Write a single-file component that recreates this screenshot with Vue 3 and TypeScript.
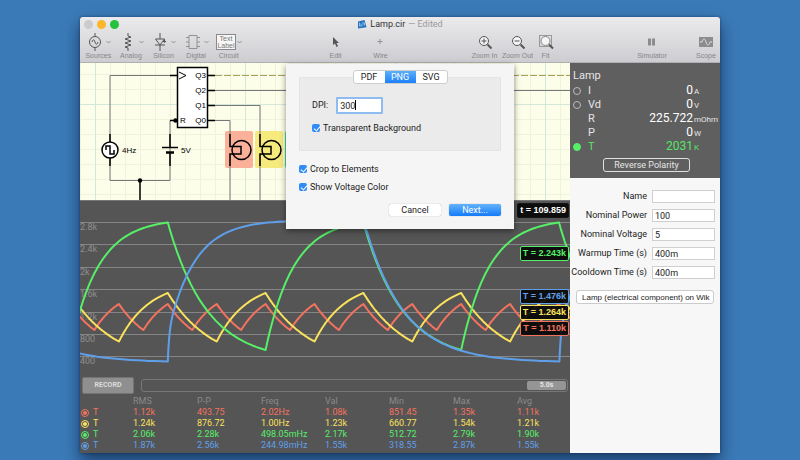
<script setup lang="ts">
import { computed, ref } from 'vue'

interface Trace { color: string; rms: string; pp: string; freq: string; val: string; min: string; max: string; avg: string }
interface Knot { x: number; y: number }
interface Reading { name: string; value: string; unit: string; plot: 'off' | 'on' | 'none' }

const red = '#f4735f'
const yellow = '#fbe25c'
const green = '#57ef68'
const blue = '#5f9fea'

const format = ref('PNG')
const formats = ['PDF', 'PNG', 'SVG']
const dpi = ref('300')
const transparent = ref(true)
const crop = ref(true)
const voltageColor = ref(true)

const readings: Reading[] = [
  { name: 'I', value: '0', unit: 'A', plot: 'off' },
  { name: 'Vd', value: '0', unit: 'V', plot: 'off' },
  { name: 'R', value: '225.722', unit: 'mOhm', plot: 'none' },
  { name: 'P', value: '0', unit: 'W', plot: 'none' },
  { name: 'T', value: '2031', unit: 'K', plot: 'on' },
]

const fields = ref([
  { id: 'name', label: 'Name', value: '' },
  { id: 'power', label: 'Nominal Power', value: '100' },
  { id: 'voltage', label: 'Nominal Voltage', value: '5' },
  { id: 'warmup', label: 'Warmup Time (s)', value: '400m' },
  { id: 'cooldown', label: 'Cooldown Time (s)', value: '400m' },
])

const traces: Trace[] = [
  { color: red, rms: '1.12k', pp: '493.75', freq: '2.02Hz', val: '1.08k', min: '851.45', max: '1.35k', avg: '1.11k' },
  { color: yellow, rms: '1.24k', pp: '876.72', freq: '1.00Hz', val: '1.23k', min: '660.77', max: '1.54k', avg: '1.21k' },
  { color: green, rms: '2.06k', pp: '2.28k', freq: '498.05mHz', val: '2.17k', min: '512.72', max: '2.79k', avg: '1.90k' },
  { color: blue, rms: '1.87k', pp: '2.56k', freq: '244.98mHz', val: '1.55k', min: '318.55', max: '2.87k', avg: '1.55k' },
]

const axis = ['2.8k', '2.4k', '2k', '1.6k', '1.2k', '800', '400'].map((label, i) => ({
  label,
  y: Math.round(21 + i * 22.4) + 0.5,
}))

const tags = [
  { text: 't = 109.859', color: '#ffffff', edge: '#151515', top: 2 },
  { text: 'T = 2.243k', color: green, edge: green, top: 45 },
  { text: 'T = 1.476k', color: blue, edge: blue, top: 88 },
  { text: 'T = 1.264k', color: yellow, edge: yellow, top: 104 },
  { text: 'T = 1.110k', color: red, edge: red, top: 120 },
]

/* Lamp temperature between two switching moments: heating and cooling are exponential. */
function curve(knots: Knot[], heat: (t: number) => number, cool: (t: number) => number): string {
  const pts: string[] = [`${knots[0].x},${knots[0].y}`]
  for (let i = 1; i < knots.length; i++) {
    const a = knots[i - 1]
    const b = knots[i]
    const shape = b.y < a.y ? heat : cool
    for (let s = 1; s <= 60; s++) {
      const t = (s / 60) * (s / 60)
      const x = a.x + (b.x - a.x) * t
      const y = a.y + ((b.y - a.y) * shape(t)) / shape(1)
      pts.push(`${x.toFixed(1)},${y.toFixed(1)}`)
    }
  }
  return pts.join(' ')
}
const expo = (k: number) => (t: number) => 1 - Math.exp(-k * t)
function zigzag(first: number, half: number, count: number, high: number, low: number, startHigh: boolean): Knot[] {
  return Array.from({ length: count }, (_, i) => ({ x: first + i * half, y: (i % 2 === 0) === startHigh ? high : low }))
}

const plots = computed(() => [
  { color: red, points: curve(zigzag(-10, 24.45, 22, 103, 129, true), expo(0.9), expo(0.7)) },
  { color: yellow, points: curve(zigzag(-10, 48.9, 12, 92, 140.5, true), expo(1.6), expo(1.1)) },
  { color: green, points: curve(zigzag(-10, 97.8, 7, 21.5, 149, false), expo(3.5), expo(2.5)) },
  {
    color: blue,
    points: curve(zigzag(-108, 195.8, 5, 19, 160.5, true),
      (t) => 0.2 * (1 - Math.exp(-150 * t)) + 0.8 * (1 - Math.exp(-7.3 * t)), expo(5)),
  },
])

const minorX = Array.from({ length: 34 }, (_, i) => 0.5 + i * 15)
const minorY = Array.from({ length: 9 }, (_, i) => 12 + i * 15)
const pins = [{ n: 'Q3', y: 12 }, { n: 'Q2', y: 27 }, { n: 'Q1', y: 42 }, { n: 'Q0', y: 57 }]
const lamps = [{ x: 150, fill: '#fbb09a' }, { x: 180, fill: '#f6ea7c' }, { x: 210, fill: '#4be07f' }]
</script>

<template>
  <main class="desktop">
    <div class="window">
      <header class="chrome">
        <div class="titlebar">
          <div class="lights">
            <span class="light"></span><span class="light amber"></span><span class="light lime"></span>
          </div>
          <h1 class="title">
            <svg width="10" height="9" viewBox="0 0 10 9"><path d="M1 1.5 7.5 0 9.5 7.2 1 8.5Z" fill="#2672b8" /><path d="M2.5 2.5v4M4 3.5v3l2-2V2M7.5 2.5v3" stroke="#a8d2f4" stroke-width=".8" fill="none" /></svg>
            Lamp.cir <span class="edited">— Edited</span>
          </h1>
        </div>
        <nav class="toolbar">
          <div class="parts">
            <button class="tool part">
              <span class="glyph"><svg class="pic" width="20" height="18" viewBox="0 0 20 18"><path d="M10 0v3M10 15v3M7 9c1-3 2-3 3 0s2 3 3 0" /><circle cx="10" cy="9" r="5.5" /></svg><svg class="chev" width="5" height="4" viewBox="0 0 5 4"><path d="M.5 1l2 2 2-2" /></svg></span>
              Sources
            </button>
            <button class="tool part">
              <span class="glyph"><svg class="pic" width="20" height="18" viewBox="0 0 20 18"><path d="M10 0v3l3 1-6 2 6 2-6 2 6 2-6 2 3 1v3" /></svg><svg class="chev" width="5" height="4" viewBox="0 0 5 4"><path d="M.5 1l2 2 2-2" /></svg></span>
              Analog
            </button>
            <button class="tool part">
              <span class="glyph"><svg class="pic" width="20" height="18" viewBox="0 0 20 18"><path d="M10 0v6M10 12v6M5.500 6h9L10 12ZM5 12h10M14.500 6v3M13 8l1.500 1.500L16 8" /></svg><svg class="chev" width="5" height="4" viewBox="0 0 5 4"><path d="M.5 1l2 2 2-2" /></svg></span>
              Silicon
            </button>
            <button class="tool part">
              <span class="glyph"><svg class="pic faint" width="20" height="18" viewBox="0 0 20 18"><path d="M6 2.500h8v13H6ZM3 4.500h3M3 9h3M3 13.500h3M14 4.500h3M14 9h3M14 13.500h3" /></svg><svg class="chev" width="5" height="4" viewBox="0 0 5 4"><path d="M.5 1l2 2 2-2" /></svg></span>
              Digital
            </button>
            <button class="tool part">
              <span class="glyph"><svg class="pic" width="20" height="18" viewBox="0 0 20 18"><rect x=".5" y="1.500" width="19" height="15" fill="#f6f6f6" stroke="#888" /><text x="10" y="8">Text</text><text x="10" y="15">Label</text></svg><svg class="chev" width="5" height="4" viewBox="0 0 5 4"><path d="M.5 1l2 2 2-2" /></svg></span>
              Circuit
            </button>
          </div>
          <span class="space one"></span>
          <button class="tool mode"><span class="glyph"><svg width="16" height="18" viewBox="0 0 16 18"><path d="M5 4v8l2-1.500 1.500 3.500 1.500-.7L8.500 10H11Z" fill="#555" stroke="none" /></svg></span>Edit</button>
          <button class="tool mode"><span class="glyph"><svg class="faint" width="16" height="18" viewBox="0 0 16 18"><path d="M4.500 8.500h5M7 6v5" /></svg></span>Wire</button>
          <span class="space two"></span>
          <button class="tool zoom"><span class="glyph"><svg class="pic" width="16" height="18" viewBox="0 0 16 18"><circle cx="7" cy="8" r="4.500" fill="#f4f4f4" /><path d="M4.500 8h5M7 5.500v5" /><path d="M10.500 11.500l4 4" stroke-width="2" /></svg></span>Zoom In</button>
          <button class="tool zoom"><span class="glyph"><svg class="pic" width="16" height="18" viewBox="0 0 16 18"><circle cx="7" cy="8" r="4.500" fill="#f4f4f4" /><path d="M4.500 8h5" /><path d="M10.500 11.500l4 4" stroke-width="2" /></svg></span>Zoom Out</button>
          <button class="tool fit"><span class="glyph"><svg class="pic" width="16" height="18" viewBox="0 0 16 18"><rect x="1.500" y="2.500" width="12" height="11" stroke="#999" /><circle cx="7.500" cy="8" r="4.500" fill="#f4f4f4" stroke="#888" /><path d="M11 11.500l4 4" stroke-width="2" /></svg></span>Fit</button>
          <span class="space three"></span>
          <button class="tool sim"><span class="glyph"><svg width="16" height="18" viewBox="0 0 16 18"><path d="M4 5.500H7v7H4ZM8 5.500h3v7H8Z" fill="#8c8b8d" stroke="none" /></svg></span>Simulator</button>
          <span class="space four"></span>
          <button class="tool scope"><span class="glyph"><svg width="16" height="18" viewBox="0 0 16 18"><rect x="1" y="4" width="14" height="10" fill="#8c8b8d" stroke="none" /><path d="M2 9h2c1-4 3-4 4 0s3 4 4 0h2" stroke="#ddd" /></svg></span>Scope</button>
        </nav>
      </header>

      <div class="body">
        <section class="work">
          <svg class="schematic" viewBox="0 0 490 137" preserveAspectRatio="xMidYMin slice">
            <rect width="490" height="137" fill="#fdfee9" />
            <path v-for="x in minorX" :key="'x' + x" :d="`M${x} 0V137`" stroke="#eef4dc" />
            <path v-for="y in minorY" :key="'y' + y" :d="`M0 ${y - 0.5}H490`" stroke="#eef4dc" />
            <path d="M15.500 0V137M165.500 0V137M315.500 0V137M465.500 0V137M0 41.500H490" stroke="#d3e8da" />
            <rect v-for="l in lamps" :key="'b' + l.x" :x="l.x - 5" y="68" width="28" height="37" rx="2" :fill="l.fill" />
            <g class="wire">
              <path d="M90 12.500H30V117.500H90V57.500" />
              <path d="M135 27.500H210M135 42.500H180V83M180 91V137M135 57.500H150V83M150 91V137" />
              <path class="clock" d="M135 12.500H490" stroke-dasharray="7 2" />
              <path d="M210 27.500H490" />
            </g>
            <g class="ink">
              <path d="M90 12.500h8M30 71v8M30 95v8M60 117v20M90 57.500h6M90 71v13M82 84.500h16M90 90v13" />
              <path d="M86 89.500h8" stroke-width="2.500" />
              <rect x="97.500" y="4.500" width="30" height="60" fill="#fff" />
              <path class="thin" d="M99 9l7 3.500-7 3.500" />
              <circle cx="30" cy="87" r="8" fill="#fff" />
              <path d="M26 87v-4h4v8h4v-4" />
              <path v-for="p in pins" :key="p.n" :d="`M127 ${p.y + 0.5}h8`" />
              <template v-for="l in lamps" :key="l.x">
                <circle :cx="l.x + 11.5" cy="87" r="9.500" />
                <path :d="`M${l.x} 71v12.500h11v7.500h-11v12`" />
              </template>
            </g>
            <circle cx="60" cy="117.500" r="2.200" /><circle cx="95.500" cy="57.500" r="2.200" />
            <g class="names">
              <text v-for="p in pins" :key="p.n" x="126" :y="p.y + 3" text-anchor="end">{{ p.n }}</text>
              <text x="100" y="60">R</text><text x="42" y="90">4Hz</text><text x="101" y="90">5V</text>
            </g>
          </svg>

          <div class="plotter">
            <svg class="plot" viewBox="0 0 490 176" preserveAspectRatio="none">
              <g v-for="a in axis" :key="a.label">
                <path :d="`M0 ${a.y}H490`" stroke="#858585" />
                <text x="0" :y="a.y + 7">{{ a.label }}</text>
              </g>
              <polyline v-for="p in plots" :key="p.color" :points="p.points" :stroke="p.color" />
            </svg>
            <span v-for="t in tags" :key="t.text" class="tag" :style="{ top: t.top + 'px', color: t.color, borderColor: t.edge }">{{ t.text }}</span>
          </div>

          <div class="timeline">
            <button class="record">RECORD</button>
            <div class="track"><button class="thumb">5.0s</button></div>
          </div>

          <table class="stats">
            <colgroup><col class="first" /><col v-for="n in 6" :key="n" class="stat" /><col /></colgroup>
            <thead>
              <tr><th></th><th>RMS</th><th>P-P</th><th>Freq</th><th>Val</th><th>Min</th><th>Max</th><th>Avg</th></tr>
            </thead>
            <tbody>
              <tr v-for="t in traces" :key="t.color" :style="{ color: t.color }">
                <td><label class="trace"><input type="checkbox" checked />T</label></td>
                <td>{{ t.rms }}</td><td>{{ t.pp }}</td><td>{{ t.freq }}</td><td>{{ t.val }}</td><td>{{ t.min }}</td><td>{{ t.max }}</td><td>{{ t.avg }}</td>
              </tr>
            </tbody>
          </table>
        </section>

        <aside class="inspector">
          <section class="readout">
            <h2>Lamp</h2>
            <div v-for="r in readings" :key="r.name" class="reading" :class="{ active: r.plot === 'on' }">
              <input v-if="r.plot !== 'none'" :id="'plot-' + r.name" type="checkbox" :checked="r.plot === 'on'" />
              <span v-else></span>
              <label :for="'plot-' + r.name">{{ r.name }}</label>
              <span class="value">{{ r.value }}</span>
              <span class="unit">{{ r.unit }}</span>
            </div>
            <button class="reverse">Reverse Polarity</button>
          </section>
          <form class="props" @submit.prevent>
            <div v-for="f in fields" :key="f.id" class="prop">
              <label :for="f.id">{{ f.label }}</label>
              <input :id="f.id" v-model="f.value" type="text" />
            </div>
            <button class="wiki" type="button">Lamp (electrical component) on Wik</button>
          </form>
        </aside>

        <form class="sheet" @submit.prevent>
          <div class="tabs">
            <button v-for="f in formats" :key="f" type="button" :class="{ on: f === format }" @click="format = f">{{ f }}</button>
          </div>
          <div class="group">
            <div class="dpi">
              <label for="dpi">DPI:</label>
              <span class="box"><input id="dpi" v-model="dpi" type="text" /><i class="caret"></i></span>
            </div>
            <label class="check"><input v-model="transparent" type="checkbox" />Transparent Background</label>
          </div>
          <label class="check"><input v-model="crop" type="checkbox" />Crop to Elements</label>
          <label class="check"><input v-model="voltageColor" type="checkbox" />Show Voltage Color</label>
          <div class="actions">
            <button type="button">Cancel</button>
            <button type="submit" class="primary">Next...</button>
          </div>
        </form>
      </div>
    </div>
  </main>
</template>

<style>
body { background: #3a7ab7; overflow: hidden; }
</style>

<style scoped>
* { box-sizing: border-box; }
button, input { font: inherit; color: inherit; margin: 0; padding: 0; }
button { border: 0; background: none; white-space: nowrap; }
h1, h2 { margin: 0; font-weight: 400; }

.desktop {
  min-height: 100vh;
  padding: 17px 10% 7px;
  background: #3a7ab7;
  font: 9px/11px Roboto, "Liberation Sans", sans-serif;
  color: #1c1c1c;
}
.window {
  display: flex;
  flex-direction: column;
  min-height: calc(100vh - 24px);
  border-radius: 3px 3px 0 0;
  overflow: hidden;
  background: #555;
  box-shadow: 0 8px 16px rgba(0, 10, 40, .55), 0 0 3px rgba(0, 10, 40, .4);
}

.chrome { background: linear-gradient(#ebeaec, #e2e1e4 30%, #cdccd0); border-bottom: 1px solid #b0afb2; }
.titlebar { display: grid; grid-template-columns: 1fr auto 1fr; align-items: center; height: 15px; padding: 0 4px; }
.lights { display: flex; gap: 4px; }
.light { width: 9px; height: 9px; border-radius: 50%; background: #cbcacc; }
.amber { background: #fbb62c; }
.lime { background: #24c23e; }
.title { display: flex; align-items: center; gap: 3px; font-size: 9px; color: #333; }
.edited { color: #9a999b; }

.toolbar { display: flex; padding: 1px 3px 2px 2px; height: 30px; color: #88878a; font: 7px/9px "Liberation Sans", sans-serif; }
.parts { display: grid; grid-template-columns: repeat(5, 1fr); width: 163px; }
.tool { display: flex; flex-direction: column; align-items: center; justify-content: center; }
.glyph { display: flex; align-items: center; justify-content: center; height: 18px; }
.part .glyph { gap: 1px; }
.tool svg { fill: none; stroke: #555; }
.tool svg.faint, .tool svg.chev { stroke: #929194; }
.tool text { font: 7px "Liberation Sans", sans-serif; fill: #777; stroke: none; text-anchor: middle; }
.mode { width: 45px; }
.zoom { width: 33px; }
.fit { width: 23px; }
.sim { width: 40px; }
.scope { width: 22px; }
.space { flex: 1 1 0; }
.space.one { flex-grow: 68; }
.space.two { flex-grow: 65; }
.space.three { flex-grow: 75; }
.space.four { flex-grow: 23; }

.body { position: relative; display: flex; flex: 1; }
.work { flex: 1; min-width: 0; display: flex; flex-direction: column; color: #8a8a8a; }
.schematic { display: block; width: 100%; height: 137px; }
.wire path { fill: none; stroke: #777; }
.wire .clock { stroke: #a5a15c; }
.ink { fill: none; stroke: #000; stroke-width: 1.500; }
.thin { stroke-width: 1; }
.names { font: 8px "Liberation Sans", sans-serif; fill: #000; }

.plotter { position: relative; border-top: 1px solid #777; background: #555; }
.plot { display: block; width: 100%; height: 176px; }
.plot text { font: 9px Roboto, sans-serif; fill: #8f8f8f; }
.plot polyline { fill: none; stroke-width: 2; stroke-linejoin: round; }
.tag {
  position: absolute;
  right: 1px;
  min-width: 48px;
  padding: 1px 2px;
  border: 1px solid;
  border-radius: 2px;
  background: rgba(8, 8, 8, .92);
  font-family: "Liberation Sans", sans-serif;
  font-weight: 700;
  text-align: center;
}

.timeline { display: flex; align-items: center; gap: 7px; padding: 0 2px; }
.record { width: 52px; height: 17px; border: 1px solid #747474; border-radius: 2px; background: #8f8f8f; color: #dcdcdc; font-size: 7px; font-weight: 700; }
.track { flex: 1; display: flex; justify-content: flex-end; height: 13px; padding: 1px; border: 1px solid #777; border-radius: 3px; }
.thumb { width: 39px; border-radius: 2px; background: #959595; color: #e6e6e6; font-size: 7px; line-height: 9px; font-weight: 700; }

.stats { width: 100%; margin-top: 2px; table-layout: fixed; border-collapse: collapse; }
.stats .first { width: 53px; }
.stats .stat { width: 64px; }
.stats th, .stats td { padding: 0; height: 11px; text-align: left; font-weight: 400; }
.trace { display: flex; align-items: center; gap: 4px; padding-left: 1px; }
.trace input { appearance: none; width: 8px; height: 8px; border: 1px solid; border-radius: 50%; background: currentColor; background-clip: content-box; padding: 1px; }

.inspector { display: flex; flex-direction: column; width: 150px; background: #f7f7f7; }
.readout { display: flex; flex-direction: column; height: 115px; padding: 6px 0 0 3px; background: #5f5f5f; color: #e6e6e6; }
.readout h2 { font-size: 11px; line-height: 14px; }
.reading { display: grid; grid-template-columns: 8px 30px 1fr 27px; align-items: baseline; height: 14px; font-size: 11px; line-height: 14px; }
.reading label { padding-left: 7px; }
.reading input { appearance: none; align-self: center; width: 8px; height: 8px; border: 1px solid #bbb; border-radius: 50%; }
.reading.active { color: #57e565; }
.reading.active input { border-color: #57ef68; background: #57ef68; }
.value { font-size: 12px; text-align: right; color: #fff; }
.active .value { color: inherit; }
.unit { padding-left: 1px; font-size: 8px; white-space: nowrap; }
.reverse { align-self: center; width: 87px; height: 14px; margin: 5px 0 0; border: 1px solid #e0e0e0; border-radius: 3px; }

.props { display: flex; flex-direction: column; gap: 6px; padding: 12px 5px 0 1px; }
.prop { display: grid; grid-template-columns: 1fr 63px; gap: 5px; align-items: center; }
.prop label { text-align: right; white-space: nowrap; }
.prop input { width: 100%; height: 13px; padding: 0 2px; border: 1px solid #cfcfcf; background: #fff; }
.wiki { margin: 5px 1px 0 5px; height: 14px; padding: 0 2px 0 5px; border: 1px solid #cbcbcb; border-radius: 3px; background: #fff; font: 8px/11px "Liberation Sans", sans-serif; text-align: left; }

.sheet {
  position: absolute;
  top: 1px;
  left: 50%;
  transform: translateX(-50%);
  display: flex;
  flex-direction: column;
  width: 228px;
  padding: 6px 13px 13px;
  background: #f5f5f5;
  box-shadow: 0 2px 6px rgba(0, 0, 0, .45);
}
.tabs { position: relative; display: flex; align-self: center; border: 1px solid #cdcdcd; border-radius: 3px; background: #fff; overflow: hidden; }
.tabs button { width: 31px; height: 12px; }
.tabs .on { background: linear-gradient(#5cb0fa, #1c80f8); color: #fff; }
.group { display: flex; flex-direction: column; gap: 8px; height: 74px; margin: -7px 0 12px; padding: 19px 12px 0; border: 1px solid #e4e4e4; background: #ebebeb; }
.dpi { display: flex; align-items: center; gap: 8px; }
.box { position: relative; width: 47px; height: 17px; border: 2px solid #8dbbf2; border-radius: 1px; background: #fff; }
.box input { display: block; width: 100%; height: 13px; padding: 0 2px; border: 0; outline: 0; background: none; }
.caret { position: absolute; left: 17px; top: 1px; width: 1px; height: 10px; background: #000; }
.check { display: flex; align-items: center; gap: 3px; line-height: 12px; }
.check + .check { margin-top: 6px; }
.check input { appearance: none; position: relative; width: 8px; height: 8px; border-radius: 2px; background: #2f8bf5; }
.check input:checked::after { content: ""; position: absolute; left: 3px; top: 1px; width: 3px; height: 5px; border: solid #fff; border-width: 0 1px 1px 0; transform: rotate(40deg); }
.actions { display: flex; justify-content: flex-end; gap: 8px; margin-top: 11px; }
.actions button { width: 52px; height: 12px; border-radius: 2px; background: #fff; box-shadow: 0 0 1px #888; }
.actions .primary { background: linear-gradient(#62b3fa, #147bf8); color: #fff; }
</style>
